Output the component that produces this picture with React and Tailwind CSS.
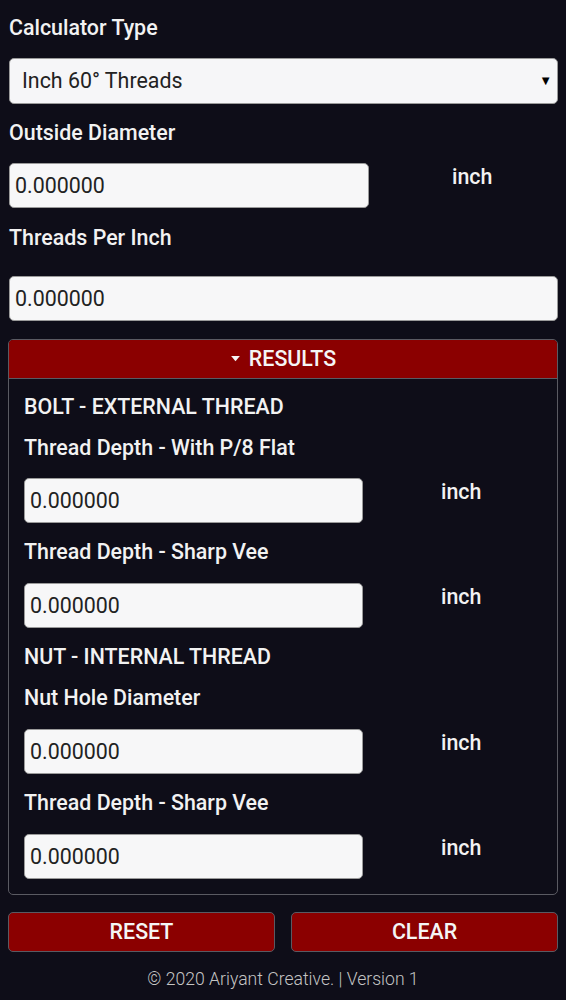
import React from "react";

const Label = ({ children, className = "" }) => (
  <div className={`text-[21.4px] leading-6 font-medium text-[#f2f2f2] ${className}`}>{children}</div>
);

const NumberBox = ({ className = "" }) => (
  <input
    type="text"
    readOnly
    value="0.000000"
    className={`h-[45px] rounded-[5px] bg-[#f7f7f8] border border-[#9a9a9a] px-[5px] text-[21.4px] text-[#222] outline-none ${className}`}
  />
);

const UnitRow = ({ width, unitLeft }) => (
  <div className="flex items-start">
    <NumberBox className={width} />
    <span className={`${unitLeft} pt-[2px] text-[21.4px] leading-6 font-medium text-[#f2f2f2]`}>inch</span>
  </div>
);

export default function App() {
  return (
    <div
      className="min-h-[1000px] bg-[#0e0d18] px-[8px] pt-[16px]"
      style={{ fontFamily: "Roboto, 'Noto Sans', sans-serif" }}
    >
      <Label className="pl-[1px]">Calculator Type</Label>

      <div className="relative mt-[18px] ml-[1px]">
        <div className="h-[46px] rounded-[5px] bg-[#f6f6f8] border border-[#9a9a9a] flex items-center pl-[12px] text-[21.4px] text-[#222]">
          Inch 60° Threads
        </div>
        <span className="absolute right-[6px] top-[13px] text-[13px] text-black">▼</span>
      </div>

      <Label className="mt-[17px] pl-[1px]">Outside Diameter</Label>
      <div className="mt-[18px] ml-[1px]">
        <UnitRow width="w-[360px]" unitLeft="ml-[83px]" />
      </div>

      <Label className="mt-[18px] pl-[1px]">Threads Per Inch</Label>
      <div className="mt-[26px] ml-[1px]">
        <NumberBox className="w-full" />
      </div>

      <div className="mt-[18px] rounded-[5px] border border-[#5a5a62] overflow-hidden">
        <div className="h-[39px] bg-[#8b0000] flex items-center justify-center gap-[8px] border-b border-[#5a5a62]">
          <svg width="11" height="7" viewBox="0 0 12 8" className="mt-[-2px]">
            <path d="M1 1h10L6 7z" fill="#f5f5f5" />
          </svg>
          <span className="text-[21.4px] font-medium text-[#f5f5f5]">RESULTS</span>
        </div>

        <div className="px-[15px] pt-[16px] pb-[15px]">
          <Label>BOLT - EXTERNAL THREAD</Label>
          <Label className="mt-[17px]">Thread Depth - With P/8 Flat</Label>
          <div className="mt-[18px]">
            <UnitRow width="w-[339px]" unitLeft="ml-[78px]" />
          </div>
          <Label className="mt-[17px]">Thread Depth - Sharp Vee</Label>
          <div className="mt-[19px]">
            <UnitRow width="w-[339px]" unitLeft="ml-[78px]" />
          </div>
          <Label className="mt-[17px]">NUT - INTERNAL THREAD</Label>
          <Label className="mt-[17px]">Nut Hole Diameter</Label>
          <div className="mt-[19px]">
            <UnitRow width="w-[339px]" unitLeft="ml-[78px]" />
          </div>
          <Label className="mt-[17px]">Thread Depth - Sharp Vee</Label>
          <div className="mt-[19px]">
            <UnitRow width="w-[339px]" unitLeft="ml-[78px]" />
          </div>
        </div>
      </div>

      <div className="mt-[17px] grid grid-cols-2 gap-[16px]">
        <button className="h-[40px] rounded-[5px] bg-[#8b0000] border border-[#5a5a62] text-[21.4px] font-medium text-[#f5f5f5]">
          RESET
        </button>
        <button className="h-[40px] rounded-[5px] bg-[#8b0000] border border-[#5a5a62] text-[21.4px] font-medium text-[#f5f5f5]">
          CLEAR
        </button>
      </div>

      <div className="mt-[14px] text-center text-[17.6px] font-light text-[#c4c4c4]">
        © 2020 Ariyant Creative. | Version 1
      </div>
    </div>
  );
}
